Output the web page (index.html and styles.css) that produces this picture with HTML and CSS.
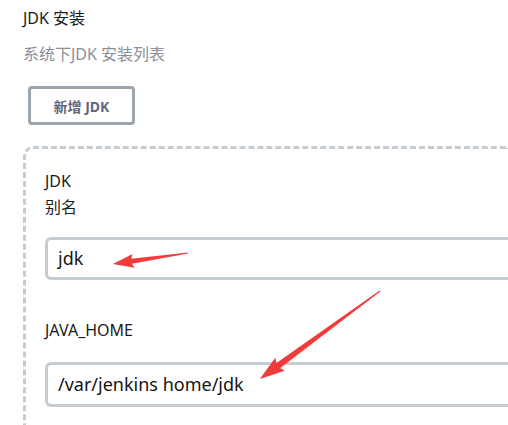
FILE: index.html
```html
<!DOCTYPE html>
<html lang="zh">
<head>
<meta charset="utf-8">
<link rel="stylesheet" href="styles.css">
</head>
<body>
<div class="page">
  <div class="title">JDK 安装</div>
  <div class="subtitle">系统下JDK 安装列表</div>
  <button class="add-btn">新增 JDK</button>
  <div class="repeat-box">
    <div class="label">JDK<br>别名</div>
    <div class="input">jdk</div>
    <div class="label label-home">JAVA_HOME</div>
    <div class="input input-home">/var/jenkins home/jdk</div>
  </div>
</div>
<svg class="arrows" width="508" height="425" viewBox="0 0 508 425">
  <polygon fill="#f33b3b" transform="translate(188,253) rotate(171.7)" points="0,-0.6 57,-2.6 55,-7 76,0 55,7 57,2.6 0,0.6"/>
  <polygon fill="#f33b3b" transform="translate(380,291) rotate(143.75)" points="0,-0.6 126,-3.2 124,-8 149,0 124,8 126,3.2 0,0.6"/>
</svg>
</body>
</html>
```
FILE: styles.css
```css
html, body {
  margin: 0;
  padding: 0;
  background: #ffffff;
}
body {
  width: 508px;
  height: 425px;
  overflow: hidden;
  position: relative;
  font-family: "Noto Sans", "Noto Sans CJK SC", sans-serif;
  color: #1d1d1f;
}
.page {
  padding: 6px 0 0 23px;
}
.title {
  font-size: 16px;
  line-height: 24px;
  color: #1b1b1b;
}
.subtitle {
  margin-top: 12px;
  font-size: 16px;
  line-height: 24px;
  color: #8b8f99;
}
.add-btn {
  display: block;
  margin: 20px 0 0 5px;
  width: 107px;
  height: 39px;
  border: 3px solid #9ba5ae;
  border-radius: 4px;
  background: #ffffff;
  font-family: "Noto Sans", "Noto Sans CJK SC", sans-serif;
  font-size: 14px;
  font-weight: 700;
  color: #636778;
  padding: 0;
}
.repeat-box {
  margin-top: 21px;
  border: 3px dashed #c6cdd2;
  border-right: none;
  border-bottom: none;
  border-radius: 10px 0 0 0;
  padding: 19px 0 30px 19px;
}
.label {
  font-size: 16px;
  line-height: 26px;
  color: #1b1b1b;
}
.label-home {
  margin-top: 37px;
}
.input {
  margin-top: 17px;
  height: 37px;
  border: 3px solid #c6cdd2;
  border-right: none;
  border-radius: 6px 0 0 6px;
  padding: 0 0 0 10px;
  font-size: 18px;
  line-height: 37px;
  color: #141414;
}
.input-home {
  margin-top: 19px;
  height: 39px;
  line-height: 39px;
}
.arrows {
  position: absolute;
  left: 0;
  top: 0;
  pointer-events: none;
}
```
